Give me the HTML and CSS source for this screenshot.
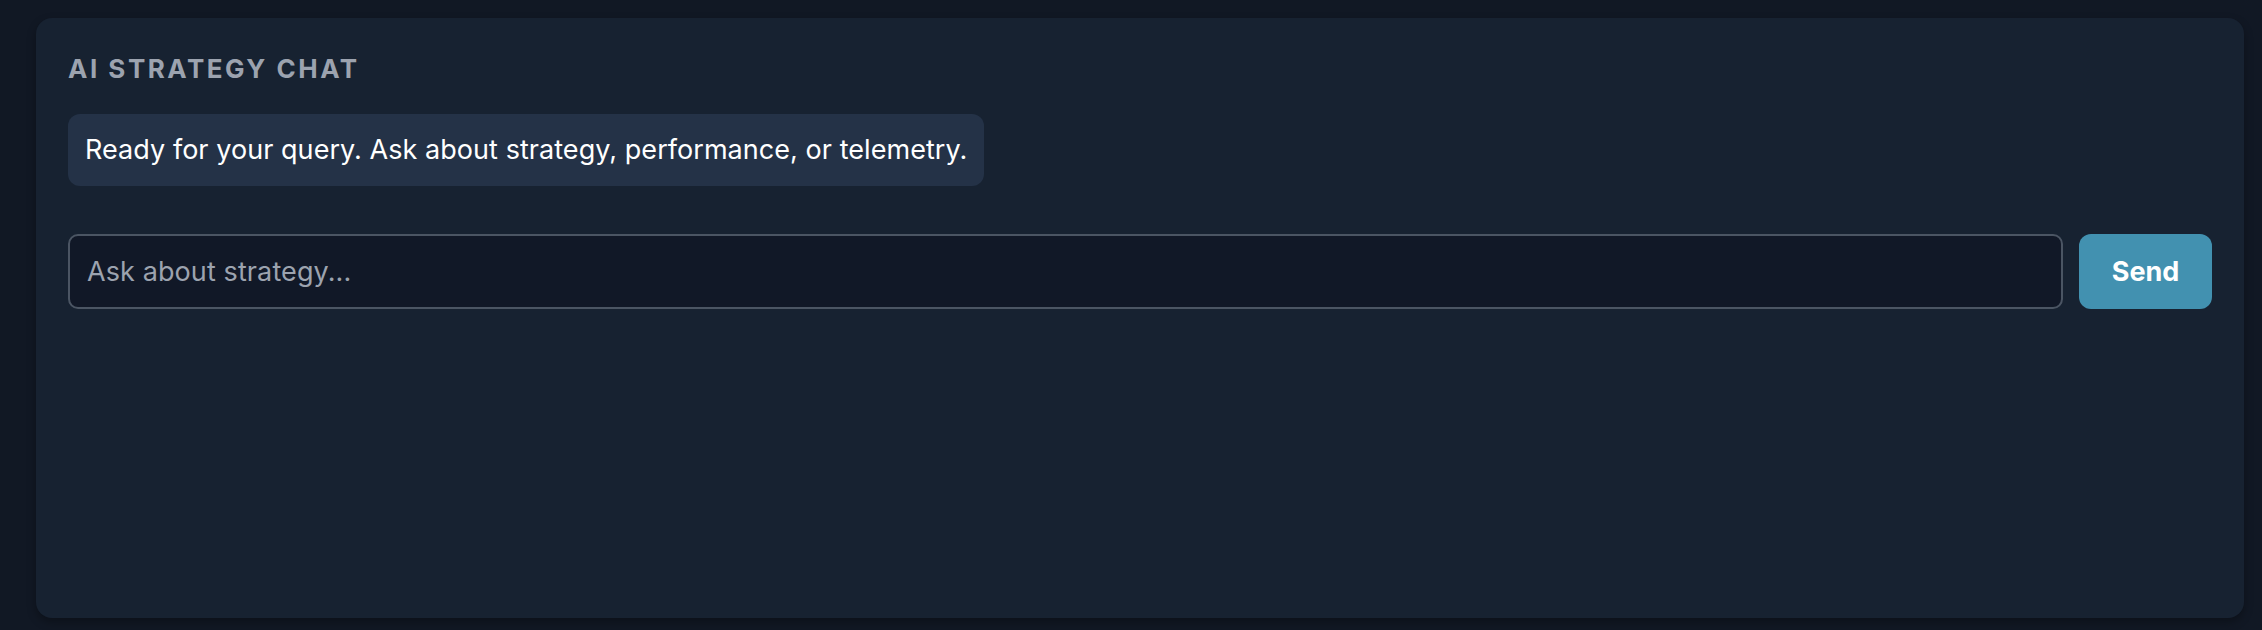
FILE: index.html
```html
<!DOCTYPE html>
<html lang="en">
<head>
<meta charset="utf-8">
<title>AI Strategy Chat</title>
<link rel="stylesheet" href="styles.css">
</head>
<body>
<section class="panel">
  <h2 class="title">AI Strategy Chat</h2>
  <div class="messages">
    <div class="bubble">Ready for your query. Ask about strategy, performance, or telemetry.</div>
  </div>
  <form class="composer">
    <input class="input" type="text" placeholder="Ask about strategy...">
    <button class="send" type="button">Send</button>
  </form>
</section>
</body>
</html>
```
FILE: styles.css
```css
* { box-sizing: border-box; }
html, body { height: 100%; }
body {
  margin: 0;
  background: #111824;
  padding: 18px 18px 12px 36px;
  font-family: Inter, "Noto Sans", "Liberation Sans", sans-serif;
}
.panel {
  height: 600px;
  background: #172231;
  border-radius: 16px;
  padding: 33px 32px 32px;
  display: flex;
  flex-direction: column;
  box-shadow: 0 4px 10px rgba(0, 0, 0, 0.3);
}
.title {
  margin: 0;
  font-size: 26px;
  line-height: 36px;
  font-weight: 700;
  text-transform: uppercase;
  letter-spacing: 2.5px;
  color: #9ca3af;
}
.messages {
  margin-top: 27px;
  display: flex;
  flex-direction: column;
  align-items: flex-start;
}
.bubble {
  background: #243247;
  color: #ffffff;
  border-radius: 12px;
  padding: 17px;
  font-size: 27px;
  line-height: 38px;
  letter-spacing: 0.05px;
}
.composer {
  margin: 48px 0 0;
  display: flex;
  gap: 16px;
}
.input {
  flex: 1;
  height: 75px;
  background: #111827;
  border: 2px solid #4b5563;
  border-radius: 10px;
  padding: 0 17px;
  font-family: inherit;
  font-size: 27px;
  letter-spacing: 0.1px;
  color: #ffffff;
  outline: none;
}
.input::placeholder { color: #9ca3af; }
.send {
  width: 133px;
  height: 75px;
  border: 0;
  border-radius: 12px;
  background: #4291b0;
  color: #ffffff;
  font-family: inherit;
  font-size: 27px;
  font-weight: 700;
  cursor: pointer;
}
```
